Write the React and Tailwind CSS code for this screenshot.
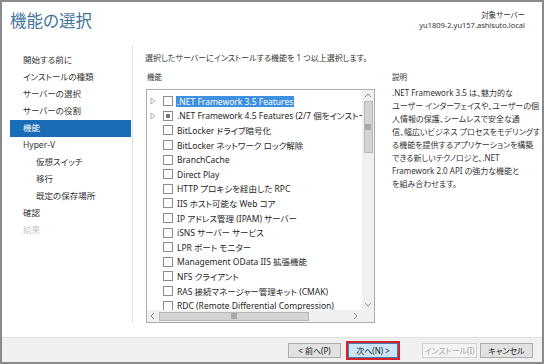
import React from 'react';

const navItems = [
  { label: '開始する前に' },
  { label: 'インストールの種類' },
  { label: 'サーバーの選択' },
  { label: 'サーバーの役割' },
  { label: '機能', active: true },
  { label: 'Hyper-V' },
  { label: '仮想スイッチ', sub: true },
  { label: '移行', sub: true },
  { label: '既定の保存場所', sub: true },
  { label: '確認' },
  { label: '結果', disabled: true },
];

const features = [
  { label: '.NET Framework 3.5 Features', expand: true, selected: true },
  { label: '.NET Framework 4.5 Features (2/7 個をインストール済み)', expand: true, partial: true },
  { label: 'BitLocker ドライブ暗号化' },
  { label: 'BitLocker ネットワーク ロック解除' },
  { label: 'BranchCache' },
  { label: 'Direct Play' },
  { label: 'HTTP プロキシを経由した RPC' },
  { label: 'IIS ホスト可能な Web コア' },
  { label: 'IP アドレス管理 (IPAM) サーバー' },
  { label: 'iSNS サーバー サービス' },
  { label: 'LPR ポート モニター' },
  { label: 'Management OData IIS 拡張機能' },
  { label: 'NFS クライアント' },
  { label: 'RAS 接続マネージャー管理キット (CMAK)' },
  { label: 'RDC (Remote Differential Compression)' },
];

const description = [
  '.NET Framework 3.5 は、魅力的な',
  'ユーザー インターフェイスや、ユーザーの個',
  '人情報の保護、シームレスで安全な通',
  '信、幅広いビジネス プロセスをモデリングす',
  'る機能を提供するアプリケーションを構築',
  'できる新しいテクノロジと、.NET',
  'Framework 2.0 API の強力な機能と',
  'を組み合わせます。',
];

const Chevron = ({ dir }) => {
  const paths = {
    up: 'M1 5 L4 2 L7 5',
    down: 'M1 2 L4 5 L7 2',
    left: 'M5 1 L2 4 L5 7',
    right: 'M2 1 L5 4 L2 7',
  };
  return (
    <svg width="8" height="8" viewBox="0 0 8 8">
      <path d={paths[dir]} fill="none" stroke="#8a8a8a" strokeWidth="1" />
    </svg>
  );
};

const Grip = ({ vertical }) => (
  <svg width="6" height="6" viewBox="0 0 6 6">
    {vertical
      ? [1, 3, 5].map((y) => <line key={y} x1="0" y1={y} x2="6" y2={y} stroke="#7a7a7a" strokeWidth="1" />)
      : [1, 3, 5].map((x) => <line key={x} x1={x} y1="0" x2={x} y2="6" stroke="#7a7a7a" strokeWidth="1" />)}
  </svg>
);

const FeatureRow = ({ item }) => (
  <div className="h-[14.6px] flex items-center pl-[3px] whitespace-nowrap">
    <span className="w-[13px] shrink-0 flex items-center">
      {item.expand && (
        <svg width="6" height="8" viewBox="0 0 6 8">
          <path d="M1 1 L5 4 L1 7 Z" fill="none" stroke="#b0b0b0" strokeWidth="1" />
        </svg>
      )}
    </span>
    <span className="w-[10px] h-[10px] shrink-0 border border-[#8c8c8c] bg-white flex items-center justify-center">
      {item.partial && <span className="w-[4px] h-[4px] bg-[#777]"></span>}
    </span>
    <span
      className={
        'ml-[3px] px-[1px] leading-[11px] ' +
        (item.selected ? 'bg-[#3d8fe0] text-white' : 'text-[#1e1e1e]')
      }
    >
      {item.label}
    </span>
  </div>
);

const Button = ({ children, variant }) => {
  const styles = {
    normal: 'bg-[#e1e1e1] border-[#adadad] text-[#1e1e1e]',
    primary: 'bg-[#cce4f7] border-[#3c7fb1] text-[#1e1e1e] outline-2 outline-[#d9202a]',
    disabled: 'bg-[#f4f4f4] border-[#cfcfcf] text-[#a6a6a6]',
  };
  return (
    <div className={'h-[15px] flex items-center justify-center border text-[8px] ' + styles[variant]}>
      {children}
    </div>
  );
};

export default function App() {
  return (
    <div className="w-[544px] h-[364px] border-2 border-[#8a8a8a] bg-white flex flex-col font-['Noto_Sans','Noto_Sans_CJK_JP',sans-serif] [font-feature-settings:'palt'] overflow-hidden">
      {/* header */}
      <div className="h-[38px] flex justify-between shrink-0">
        <div className="pl-[8px] pt-[9px] text-[16.5px] leading-[20px] text-[#3f7699]">機能の選択</div>
        <div className="pr-[17px] pt-[8px] text-right text-[7.5px] leading-[10px] text-[#333]">
          <div>対象サーバー</div>
          <div>yu1809-2.yu157.ashisuto.local</div>
        </div>
      </div>

      {/* body */}
      <div className="flex-1 flex pt-[5px] pb-[14px] min-h-0">
        <div className="w-[131px] shrink-0 border-r border-[#e3e3e3] pt-[6.5px] pl-[8px] pr-[1px]">
          {navItems.map((n) => (
            <div
              key={n.label}
              className={
                'h-[17px] flex items-center text-[8.5px] ' +
                (n.sub ? 'pl-[26px] ' : 'pl-[13px] ') +
                (n.active ? 'bg-[#1a6db4] text-white' : n.disabled ? 'text-[#c4c4c4]' : 'text-[#333]')
              }
            >
              {n.label}
            </div>
          ))}
        </div>

        <div className="flex-1 flex flex-col pl-[12px] min-w-0">
          <div className="mt-[7px] leading-[12px] text-[8px] text-[#333]">
            選択したサーバーにインストールする機能を 1 つ以上選択します。
          </div>
          <div className="mt-[7px] flex-1 flex min-h-0">
            <div className="ml-[1px] w-[229px] flex flex-col">
              <div className="leading-[12px] text-[7.5px] text-[#333] pl-[1px]">機能</div>
              <div className="mt-[6px] flex-1 border border-[#abadb3] flex flex-col min-h-0 text-[8.5px]">
                <div className="flex-1 flex min-h-0">
                  <div className="flex-1 overflow-hidden pt-[4px]">
                    {features.map((f) => (
                      <FeatureRow key={f.label} item={f} />
                    ))}
                  </div>
                  <div className="w-[12px] bg-[#f0f0f0] flex flex-col items-center">
                    <div className="h-[11px] flex items-center justify-center">
                      <Chevron dir="up" />
                    </div>
                    <div className="w-[9px] h-[52px] bg-[#d4d4d4] border border-[#b8b8b8] flex items-center justify-center">
                      <Grip vertical />
                    </div>
                    <div className="flex-1"></div>
                    <div className="h-[11px] flex items-center justify-center">
                      <Chevron dir="down" />
                    </div>
                  </div>
                </div>
                <div className="h-[12px] flex shrink-0">
                  <div className="flex-1 bg-[#f0f0f0] flex items-center">
                    <div className="w-[12px] flex justify-center">
                      <Chevron dir="left" />
                    </div>
                    <div className="w-[150px] h-[9px] bg-[#d4d4d4] border border-[#b8b8b8] flex items-center justify-center">
                      <Grip />
                    </div>
                    <div className="flex-1"></div>
                    <div className="w-[12px] flex justify-center">
                      <Chevron dir="right" />
                    </div>
                  </div>
                  <div className="w-[12px] bg-[#f0f0f0]"></div>
                </div>
              </div>
            </div>

            <div className="pl-[17px] flex-1 text-[#333]">
              <div className="leading-[12px] text-[7.5px]">説明</div>
              <div className="mt-[2.5px] text-[8px] leading-[13px] whitespace-nowrap">
                {description.map((line) => (
                  <div key={line}>{line}</div>
                ))}
              </div>
            </div>
          </div>
        </div>
      </div>

      {/* footer */}
      <div className="h-[25px] shrink-0 bg-[#f0f0f0] border-t border-[#e0e0e0] flex justify-end items-start pt-[5px] pr-[9px]">
        <div className="w-[53px]">
          <Button variant="normal">&lt; 前へ(P)</Button>
        </div>
        <div className="w-[50px] ml-[7px]">
          <Button variant="primary">次へ(N) &gt;</Button>
        </div>
        <div className="w-[55px] ml-[24px]">
          <Button variant="disabled">インストール(I)</Button>
        </div>
        <div className="w-[53px] ml-[3px]">
          <Button variant="normal">キャンセル</Button>
        </div>
      </div>
    </div>
  );
}
